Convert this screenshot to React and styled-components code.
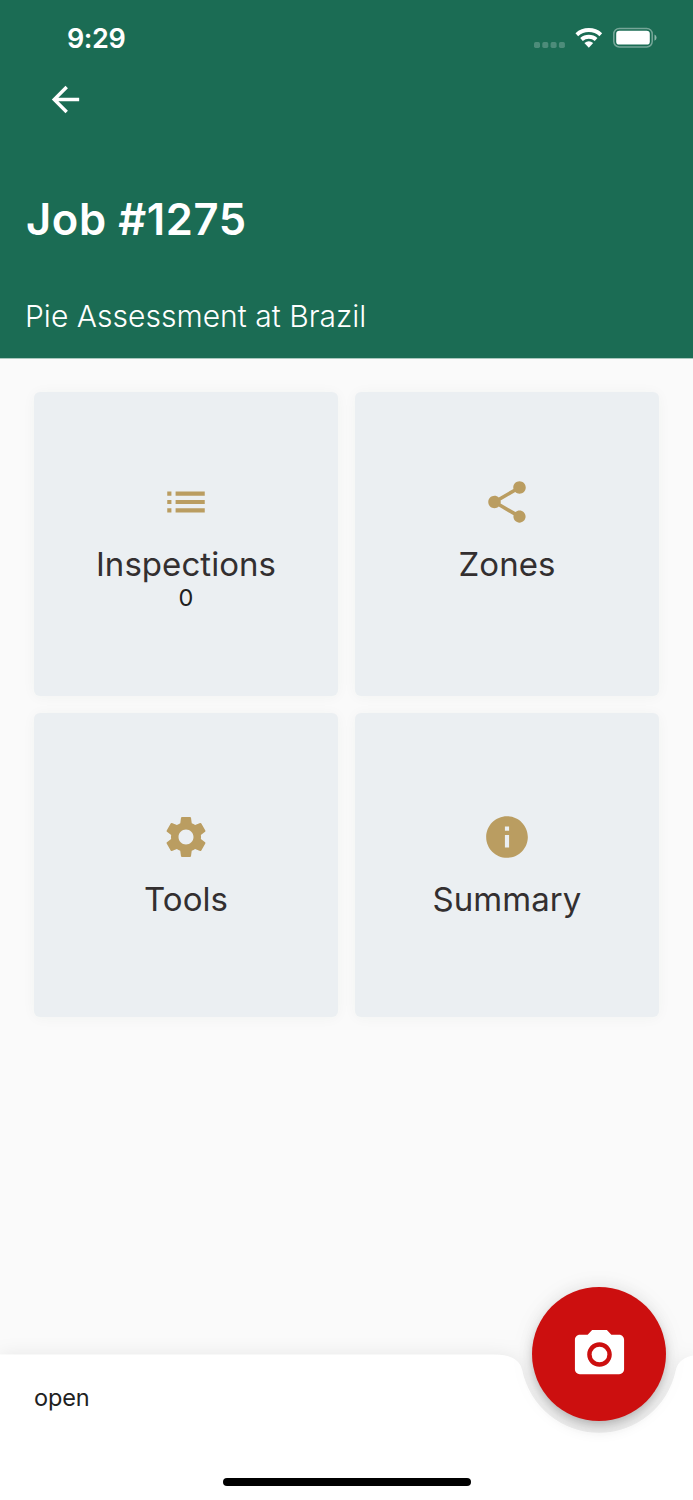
import React from "react"
import styled, { createGlobalStyle } from "styled-components"
import { MdArrowBack, MdList, MdShare, MdSettings, MdInfo, MdCameraAlt } from "react-icons/md"

const GlobalStyle = createGlobalStyle`
  * {
    box-sizing: border-box;
  }
  body {
    margin: 0;
    background-color: #fafafa;
    font-family: Inter, "Liberation Sans", sans-serif;
  }
`

const Screen = styled.div`
  width: 693px;
  height: 1500px;
  display: flex;
  flex-direction: column;
  overflow: hidden;
  background-color: #fafafa;
`

const Header = styled.header`
  height: 359px;
  flex: none;
  display: flex;
  flex-direction: column;
  background-color: #1b6c54;
  border-bottom: 1px solid #a9c8be;
  color: white;
`

const StatusBar = styled.div`
  height: 74px;
  padding: 0 36px 0 67px;
  display: flex;
  justify-content: space-between;
  align-items: center;
`

const Time = styled.span`
  font-size: 27px;
  line-height: 32px;
  font-weight: 600;
  letter-spacing: -0.4px;
  margin-top: 3px;
`

const StatusIcons = styled.svg`
  width: 124px;
  height: 24px;
  margin-top: 1px;
`

const BackButton = styled.button`
  width: 40px;
  height: 40px;
  margin: 5px 0 0 45px;
  padding: 0;
  border: 0;
  background: none;
  color: white;
  font-size: 41px;
  line-height: 0;
`

const Title = styled.h1`
  margin: 72px 0 0 26px;
  font-size: 43.5px;
  line-height: 56px;
  font-weight: 600;
  letter-spacing: 0.6px;
`

const Subtitle = styled.p`
  margin: 49px 0 0 25px;
  font-size: 30px;
  line-height: 40px;
  font-weight: 300;
  letter-spacing: 0.03px;
`

const Grid = styled.main`
  flex: 1;
  display: grid;
  grid-template-columns: 304px 304px;
  grid-auto-rows: 304px;
  gap: 17px;
  padding: 33px 34px;
`

const Card = styled.section`
  display: flex;
  flex-direction: column;
  justify-content: center;
  align-items: center;
  border-radius: 6px;
  background-color: #ebeff2;
  box-shadow: 0 1px 14px rgba(40, 70, 60, 0.04);
`

const CardIcon = styled.div`
  height: 50px;
  font-size: 50px;
  line-height: 0;
  color: #ba9d61;
`

const CardTitle = styled.h2`
  margin: 17px 0 0;
  font-size: 33px;
  line-height: 40px;
  font-weight: 400;
  letter-spacing: 0.05px;
  color: #332f30;
`

const CardCount = styled.span`
  height: 28px;
  font-size: 23.5px;
  line-height: 27px;
  color: #212121;
`

const Bottom = styled.footer`
  position: relative;
  flex: none;
  height: 146px;
  filter: drop-shadow(0 0 9px rgba(0, 0, 0, 0.08));
`

// circular notch for the floating button, 78px around its centre
const BottomBar = styled.div`
  height: 146px;
  display: flex;
  flex-direction: column;
  justify-content: space-between;
  align-items: center;
  padding: 30px 34px 14px;
  background-color: white;
  clip-path: path(
    "M0 0.5 H494 Q519 0.5 522.3 16.5 A78.4 78.4 0 0 0 675.7 16.5 Q679 0.5 704 0.5 V146 H0 Z"
  );
`

const Status = styled.span`
  align-self: flex-start;
  font-size: 23.5px;
  line-height: 28px;
  letter-spacing: -0.15px;
  color: #212121;
`

const HomeIndicator = styled.div`
  width: 248px;
  height: 8px;
  border-radius: 4px;
  background-color: black;
`

const CameraButton = styled.button`
  position: absolute;
  right: 27px;
  top: -67px;
  width: 134px;
  height: 134px;
  display: flex;
  justify-content: center;
  align-items: center;
  padding: 0;
  border: 0;
  border-radius: 50%;
  background-color: #cc0f0f;
  color: white;
  font-size: 59px;
  box-shadow: 0 5px 8px -2px rgba(0, 0, 0, 0.16), 0 9px 15px rgba(0, 0, 0, 0.09),
    0 2px 28px rgba(0, 0, 0, 0.05);
`

const cards = [
  { title: "Inspections", Icon: MdList, count: 0 },
  { title: "Zones", Icon: MdShare, count: "" },
  { title: "Tools", Icon: MdSettings },
  { title: "Summary", Icon: MdInfo },
]

const PhoneStatus = () => (
  <StatusIcons viewBox="0 0 124 24" fill="white">
    <g opacity="0.22">
      <rect x="1" y="16" width="6" height="6" rx="1.7" />
      <rect x="9.3" y="16" width="6" height="6" rx="1.7" />
      <rect x="17.6" y="16" width="6" height="6" rx="1.7" />
      <rect x="25.9" y="16" width="6" height="6" rx="1.7" />
    </g>
    <g fill="none" stroke="white" strokeWidth="4">
      <path d="M43.8 8.7 A18 18 0 0 1 67.8 8.7" />
      <path d="M48.5 13.5 A11 11 0 0 1 63.1 13.5" />
    </g>
    <path d="M51.4 17.1 A7 7 0 0 1 60.2 17.1 L55.8 21.8 Z" />
    <rect x="80.8" y="2.4" width="38.4" height="18.6" rx="5.5" fill="none" stroke="white" strokeWidth="1.5" opacity="0.4" />
    <rect x="83.2" y="4.8" width="33.6" height="13.8" rx="3.2" />
    <path d="M121.5 8.6 Q123.6 9.6 123.6 11.7 Q123.6 13.8 121.5 14.8 Z" opacity="0.5" />
  </StatusIcons>
)

export default () => {
  return (
    <>
      <GlobalStyle />
      <Screen>
        <Header>
          <StatusBar>
            <Time>9:29</Time>
            <PhoneStatus />
          </StatusBar>
          <BackButton aria-label="Back">
            <MdArrowBack />
          </BackButton>
          <Title>Job #1275</Title>
          <Subtitle>Pie Assessment at Brazil</Subtitle>
        </Header>
        <Grid>
          {cards.map(({ title, Icon, count }) => (
            <Card key={title}>
              <CardIcon>
                <Icon />
              </CardIcon>
              <CardTitle>{title}</CardTitle>
              {/* an empty count still keeps its line */}
              {count !== undefined && <CardCount>{count}</CardCount>}
            </Card>
          ))}
        </Grid>
        <Bottom>
          <BottomBar>
            <Status>open</Status>
            <HomeIndicator />
          </BottomBar>
          <CameraButton aria-label="Take photo">
            <MdCameraAlt />
          </CameraButton>
        </Bottom>
      </Screen>
    </>
  )
}
